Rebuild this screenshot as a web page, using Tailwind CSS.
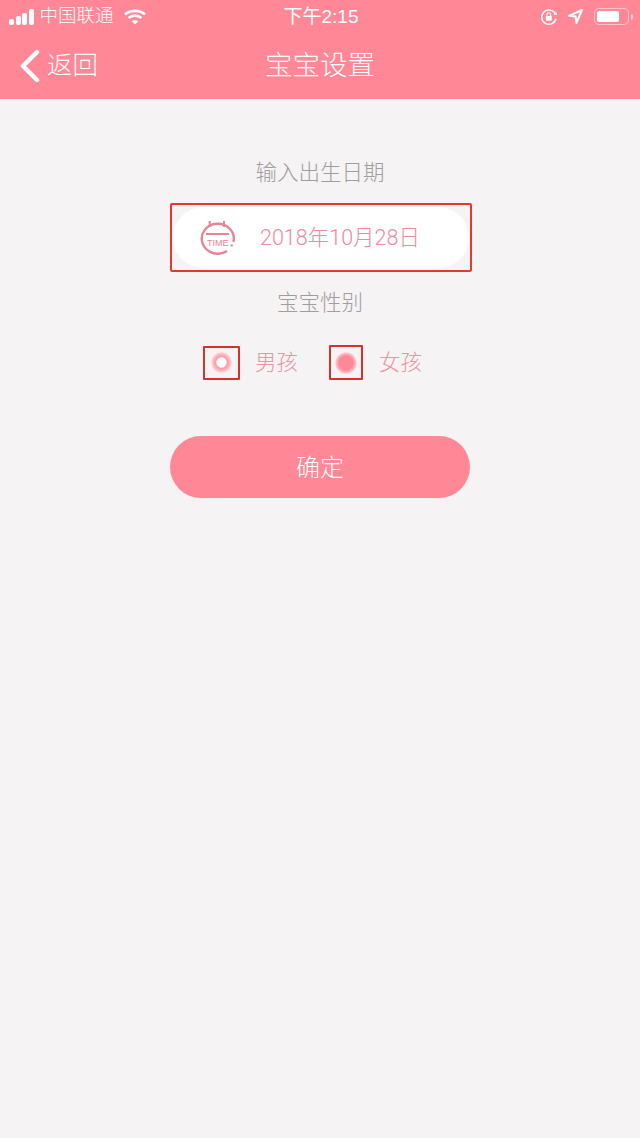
<!DOCTYPE html>
<html lang="zh-CN">
<head>
  <meta charset="UTF-8" />
  <meta name="viewport" content="width=device-width, initial-scale=1.0"/>
  <title>宝宝设置</title>
  <script src="https://cdn.jsdelivr.net/npm/@tailwindcss/browser@4"></script>
</head>
<body class="bg-[#f6f3f4] font-['Liberation_Sans','Noto_Sans_CJK_SC',sans-serif] font-light w-[640px] h-[1138px] overflow-hidden">

  <header class="bg-[#ff8796] h-[99px] text-white">
    <!-- status bar -->
    <div class="h-[33px] pl-[9px] pr-[7px] grid grid-cols-[1fr_auto_1fr] items-center">
      <div class="flex items-center">
        <div class="flex items-end gap-[1.5px]">
          <span class="w-[5px] h-[6px] rounded-[2px] bg-white"></span>
          <span class="w-[5px] h-[9px] rounded-[2px] bg-white"></span>
          <span class="w-[5px] h-[12px] rounded-[2px] bg-white"></span>
          <span class="w-[5px] h-[16px] rounded-[2px] bg-white"></span>
        </div>
        <span class="ml-[6px] text-[18.5px] leading-none">中国联通</span>
        <svg class="ml-[10px]" width="22" height="16" viewBox="0 0 22 16" fill="none" stroke="white" stroke-width="2.8">
          <path d="M1 5.5C6.5 .6 15.5 .6 21 5.5" />
          <path d="M4.6 9C8.2 5.9 13.8 5.9 17.4 9" />
          <path d="M11 15.5L7.6 12.2C9.6 10.8 12.4 10.8 14.4 12.2Z" fill="white" stroke="none" />
        </svg>
      </div>
      <span class="text-[19px] leading-none font-normal">下午2:15</span>
      <div class="flex items-center justify-end">
        <svg width="18" height="18" viewBox="0 0 18 18" fill="none" stroke="white" stroke-width="1.5">
          <path d="M15.6 6.4A7.2 7.2 0 1 0 16 10.5" />
          <path d="M13.6 6.8L17.4 6.8L16 3.4Z" fill="white" stroke="none" />
          <rect x="5.8" y="8" width="6" height="4.8" rx="0.8" fill="white" stroke="none" />
          <path d="M7 8V6.6a1.8 1.8 0 0 1 3.6 0V8" stroke-width="1.1" />
        </svg>
        <svg class="ml-[10px]" width="15" height="15" viewBox="0 0 15 15" fill="none" stroke="white" stroke-width="2" stroke-linejoin="round">
          <path d="M14 1L1 6.8L7.6 7.5L8.4 14Z" />
        </svg>
        <div class="ml-[11px] w-[35px] h-[17px] rounded-[5px] border border-white/50 p-[2px]">
          <div class="w-[22px] h-full rounded-[2px] bg-white"></div>
        </div>
        <span class="ml-[2px] w-[2px] h-[6px] rounded-r-sm bg-white/50"></span>
      </div>
    </div>
    <!-- nav bar -->
    <div class="relative h-[66px] flex items-center justify-center">
      <div class="absolute left-[20px] top-[16px] flex items-center">
        <svg width="20" height="34" viewBox="0 0 20 34" fill="none" stroke="white" stroke-width="4.4" stroke-linecap="round" stroke-linejoin="round">
          <path d="M17 3L3 17L17 31" />
        </svg>
        <span class="ml-[7px] text-[25.5px] leading-none">返回</span>
      </div>
      <h1 class="text-[27.5px] leading-none font-light">宝宝设置</h1>
    </div>
  </header>

  <main class="flex flex-col items-center">
    <p class="mt-[62px] text-[21.5px] leading-[24px] text-[#a09d9e]">输入出生日期</p>

    <div class="mt-[18px] ml-[2px] w-[302px] h-[69px] border-2 border-[#e8372c] rounded-[2px] flex items-center px-[1px]">
      <div class="w-full h-[61px] rounded-full bg-white flex items-center pl-[27px]">
        <svg width="36" height="34" viewBox="0 0 36 34" fill="none" stroke="#e98396" stroke-width="2">
          <path d="M9.7 0V6M24 0V6" stroke-width="2" />
          <path d="M33.4 21A16 15 0 1 0 27 30" stroke-width="2.4" />
          <path d="M6 13H29" stroke-width="2" />
          <circle cx="31.7" cy="24.4" r="1.2" fill="#e98396" stroke="none" />
          <text x="7" y="25" font-size="9" fill="#e98396" stroke="none" font-family="Liberation Sans, sans-serif">TIME</text>
        </svg>
        <span class="ml-[24px] font-['Roboto','Noto_Sans_CJK_SC',sans-serif] text-[21.5px] leading-none text-[#ee8a9e]">2018年10月28日</span>
      </div>
    </div>

    <p class="mt-[19px] text-[21.5px] leading-[24px] text-[#a09d9e]">宝宝性别</p>

    <div class="mt-[30px] flex items-center w-[234px]">
      <span class="w-[37px] h-[34px] border-2 border-[#d8302a] rounded-[1px] flex items-center justify-center">
        <span class="w-[21px] h-[21px] rounded-full bg-[radial-gradient(circle_closest-side,#ffffff_0%,#ffffff_42%,#ff9aa8_56%,#ffb0bb_75%,#ffe0e4_100%)]"></span>
      </span>
      <span class="ml-[15px] pt-[2px] text-[21.5px] leading-none text-[#ec93a4]">男孩</span>
      <span class="ml-[31px] w-[34px] h-[35px] border-2 border-[#d8302a] rounded-[1px] flex items-center justify-center">
        <span class="w-[22px] h-[22px] rounded-full bg-[radial-gradient(circle_closest-side,#ff8796_0%,#ff8796_62%,#ffb3be_85%,#fbe6e9_100%)]"></span>
      </span>
      <span class="ml-[16px] pt-[2px] text-[21.5px] leading-none text-[#ec93a4]">女孩</span>
    </div>

    <button class="mt-[56px] w-[300px] h-[62px] pt-[1px] rounded-full bg-[#ff8796] text-white text-[24px] leading-none">确定</button>
  </main>

</body>
</html>
